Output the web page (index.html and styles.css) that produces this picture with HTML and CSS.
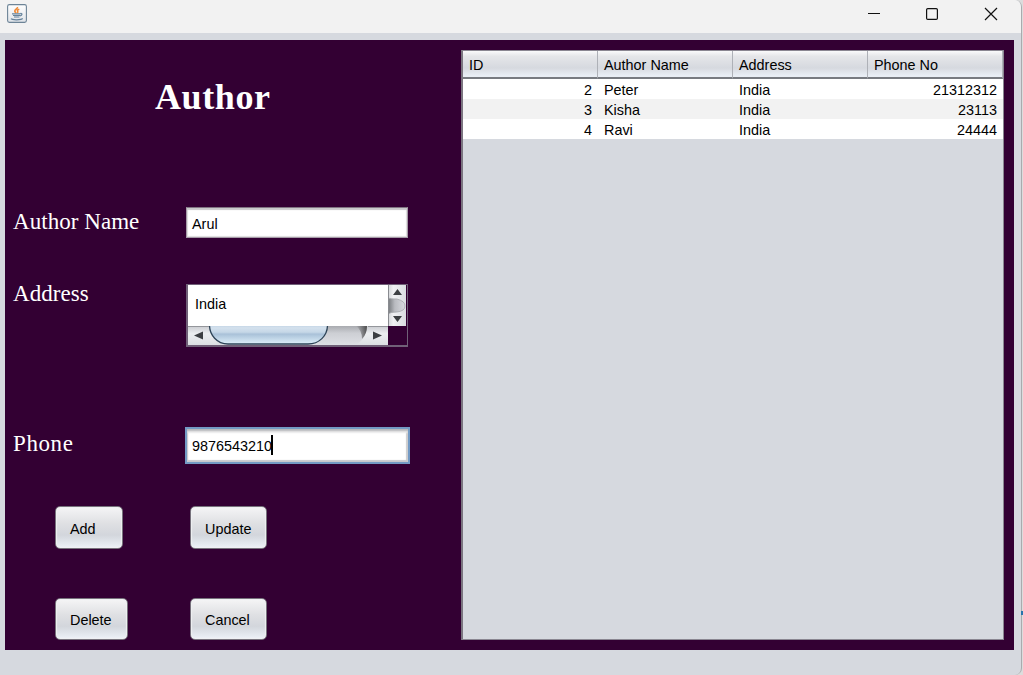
FILE: index.html
```html
<!DOCTYPE html>
<html lang="en">
<head>
<meta charset="utf-8">
<title>Author</title>
<link rel="stylesheet" href="styles.css">
</head>
<body>
<div class="window">
  <header class="titlebar">
    <svg class="app-icon" width="20" height="19" viewBox="0 0 20 19">
      <defs><linearGradient id="ib" x1="0" y1="0" x2="0" y2="1"><stop offset="0" stop-color="#fff"/><stop offset="1" stop-color="#dfe3e8"/></linearGradient></defs>
      <rect x=".6" y=".6" width="18.8" height="17.8" rx="1.8" fill="url(#ib)" stroke="#6d8497" stroke-width="1.1"/>
      <path d="M10.500 3c.5 1.700-3.200 2.700-2.700 4.300.2.700 1 1.200 1.200 1.700M12.300 5.200c-1.800.6-2.300 1.200-1.600 2 .4.600.1 1.200-.5 1.700" fill="none" stroke="#f08a35" stroke-width="1.600"/>
      <path d="M5 9.800h8.500M6 11.500h7M7 13h5.500M13.500 9.500c2.200-.4 1.800 2-.5 2.400M4 14.700c1 1.500 10.500 1.500 11.600-.3" fill="none" stroke="#65829b" stroke-width="1.200"/>
    </svg>
    <svg class="win-buttons" width="132" height="14" viewBox="0 0 132 14" fill="none" stroke="#111" stroke-width="1.200">
      <path d="M0 6.500h12"/>
      <rect x="58.600" y="1.600" width="10.800" height="10.800" rx="1.200"/>
      <path d="M117 1l12 12M129 1l-12 12"/>
    </svg>
  </header>
  <main class="panel">
    <section class="form">
      <h1 class="title">Author</h1>
      <div class="row row-name"><span class="label">Author Name</span><div class="field">Arul</div></div>
      <div class="row row-address"><span class="label">Address</span>
        <div class="scrollpane">
          <div class="textarea">India</div>
          <svg class="vbar" width="18" height="41" viewBox="0 0 18 41">
            <defs>
              <linearGradient id="vt"><stop offset="0" stop-color="#74777b"/><stop offset=".4" stop-color="#b9bbc0"/><stop offset="1" stop-color="#d9dbe0"/></linearGradient>
              <linearGradient id="vb"><stop offset="0" stop-color="#d3d5d8"/><stop offset=".3" stop-color="#f0f1f3"/><stop offset="1" stop-color="#dadde1"/></linearGradient>
            </defs>
            <rect width="18" height="41" fill="url(#vb)"/>
            <path d="M0 13q2 1 9 1q8 2 8 7t-8 6q-7 0-9 2z" fill="url(#vt)"/>
            <path d="M0 13q2 1 9 1q8 2 8 7t-8 6q-7 0-9 2" fill="none" stroke="#9da0a5" stroke-width=".7"/>
            <path d="M5 10l4.500-6 4.500 6zM5 31h9l-4.500 6z" fill="#3c3f42"/>
            <path d="M.5 0v41" stroke="#898b90"/>
          </svg>
          <svg class="hbar" width="200" height="19" viewBox="0 0 200 19">
            <defs>
              <linearGradient id="hb" x1="0" y1="0" x2="0" y2="1"><stop offset="0" stop-color="#c9cbd0"/><stop offset=".4" stop-color="#eceef0"/><stop offset="1" stop-color="#dcdfe3"/></linearGradient>
              <linearGradient id="ht" x1="0" y1="0" x2="0" y2="1"><stop offset="0" stop-color="#a9abb0"/><stop offset=".4" stop-color="#cdcfd4"/><stop offset="1" stop-color="#dcdee3"/></linearGradient>
              <linearGradient id="hs"><stop offset="0" stop-color="#333" stop-opacity="0"/><stop offset="1" stop-color="#333" stop-opacity=".8"/></linearGradient>
              <linearGradient id="th" x1="0" y1="0" x2="0" y2="1"><stop offset="0" stop-color="#bfd2e3"/><stop offset=".15" stop-color="#d4e1ed"/><stop offset=".38" stop-color="#c5d7e7"/><stop offset=".48" stop-color="#a9c1d8"/><stop offset="1" stop-color="#def0fa"/></linearGradient>
            </defs>
            <rect width="200" height="19" fill="url(#hb)"/>
            <path d="M22 0h157q-1 13-10 18H30z" fill="url(#ht)"/>
            <path d="M168 0h11q0 8-5 13q0-9-6-13z" fill="url(#hs)"/>
            <path d="M21.500-1C21.500 9 29 18 40 18h80c11 0 19.500-8 19.500-19z" fill="url(#th)" stroke="#2d4357" stroke-width="1.300"/>
            <path d="M15 5.500v8L6 9.500zM185 5.500v8l9-4z" fill="#3c3f42"/>
            <path d="M0 .5h21M180 .5h20" stroke="#94969b"/>
          </svg>
        </div>
      </div>
      <div class="row row-phone"><span class="label label-phone">Phone</span><div class="field field-focus">9876543210<span class="caret"></span></div></div>
      <div class="buttons">
        <button class="btn btn-add">Add</button><button class="btn btn-update">Update</button>
        <button class="btn btn-delete">Delete</button><button class="btn btn-cancel">Cancel</button>
      </div>
    </section>
    <section class="table-pane">
      <table class="table">
        <thead><tr><th>ID</th><th>Author Name</th><th>Address</th><th>Phone No</th></tr></thead>
        <tbody>
          <tr><td class="num">2</td><td>Peter</td><td>India</td><td class="num">21312312</td></tr>
          <tr><td class="num">3</td><td>Kisha</td><td>India</td><td class="num">23113</td></tr>
          <tr><td class="num">4</td><td>Ravi</td><td>India</td><td class="num">24444</td></tr>
        </tbody>
      </table>
    </section>
  </main>
</div>
<span class="edge-mark"></span>
</body>
</html>
```
FILE: styles.css
```css
* { box-sizing: border-box; }
body {
  margin: 0;
  position: relative;
  width: 1023px;
  background: #dcdcdc;
  font: 14.4px "Liberation Sans", Arial, sans-serif;
  color: #000;
  overflow: hidden;
}
.window {
  width: 1022px;
  height: 675px;
  background: #d6d9df;
  border-right: 1px solid #a9abae;
  border-radius: 0 7px 7px 0;
  overflow: hidden;
}
.titlebar {
  height: 33px;
  padding: 4px 21px 0 7px;
  background: #f2f2f2;
  display: flex;
  justify-content: space-between;
}
.win-buttons { margin: 3px 0 0; }
.panel {
  display: flex;
  width: 1009px;
  height: 610px;
  margin: 7px 0 0 5px;
  background: #330033;
}
.form { width: 456px; height: 610px; padding-left: 8px; }
.title {
  margin: 36px 0 0 142px;
  height: 42px;
  font: bold 36px/42px "Liberation Serif", "Times New Roman", serif;
  letter-spacing: .6px;
  color: #fff;
}
.row { display: flex; }
.label {
  width: 173px;
  font: 23px/26px "Liberation Serif", "Times New Roman", serif;
  letter-spacing: .05px;
  color: #fff;
}
.label-phone { letter-spacing: .6px; }
.row-name { margin-top: 89px; height: 31px; }
.row-name .label { padding-top: 2px; }
.row-address { margin-top: 46px; height: 63px; }
.row-address .label { margin-top: -3px; }
.row-phone { margin-top: 80px; height: 37px; }
.row-phone .label { width: 172px; padding-top: 4px; }
.field {
  width: 222px;
  height: 31px;
  padding: 1px 0 0 5px;
  line-height: 31px;
  background: #fff;
  border: 1px solid #a69ba8;
  border-top-color: #807482;
  box-shadow: inset 0 2px 1px #c9c9cb, inset 1px 0 1px #ddd, inset -1px -1px 1px #ddd;
}
.field-focus {
  display: flex;
  width: 225px;
  height: 37px;
  line-height: 33px;
  border: 2px solid #739ac4;
  box-shadow: inset 0 2px 2px #b5b6ba, inset 0 4px 2px #eee, inset 1px -2px 1px #c8c8cc, inset -2px 0 1px #ccc;
}
.caret { width: 2px; height: 20px; margin: 5px 0 0 -1px; background: #000; }
.scrollpane {
  display: grid;
  grid-template: 41px 19px / 200px 18px;
  width: 222px;
  height: 63px;
  border: 1px solid #706078;
  border-width: 1px 1px 2px 2px;
}
.textarea { background: #fff; padding: 0 0 0 7px; line-height: 39px; }
.vbar, .hbar { display: block; }
.hbar { overflow: hidden; }
.buttons {
  display: grid;
  grid-template-columns: 135px 77px;
  row-gap: 49px;
  justify-items: start;
  margin: 42px 0 0 42px;
}
.btn {
  height: 43px;
  padding: 2px 0 0 14px;
  text-align: left;
  font: inherit;
  border: 1px solid #77727c;
  border-radius: 5px;
  background: linear-gradient(#f5f5f6 0%, #dfe0e3 40%, #d3d6dc 68%, #d8dce2 75%, #eef2f8 100%);
  box-shadow: inset 0 0 1px 1px #eff0f2;
}
.btn-add { width: 68px; }
.btn-update, .btn-cancel { width: 77px; }
.btn-delete { width: 73px; }
.btn-delete, .btn-cancel { height: 42px; padding-top: 1px; }
.table-pane {
  width: 543px;
  height: 590px;
  margin-top: 10px;
  background: #d6d9df;
  border: 1px solid #8a8691;
  border-left: 2px solid #7b7580;
}
.table {
  width: 540px;
  table-layout: fixed;
  border-collapse: separate;
  border-spacing: 0;
}
.table th {
  height: 28px;
  padding: 1px 6px 0;
  text-align: left;
  font-weight: normal;
  background: linear-gradient(#fafafb 0%, #e5e6e9 20%, #d6d9df 65%, #e8edf4 94%);
  border-right: 1px solid #aeb1b7;
  border-bottom: 2px solid #777a80;
}
.table td { height: 20px; padding: 2px 6px 0; line-height: 18px; background: #fff; }
.table tr:nth-child(even) td { background: #f2f2f2; }
.table .num { text-align: right; padding-right: 6px; }
.edge-mark { position: absolute; right: 0; top: 611px; width: 2px; height: 4px; background: #2675ad; }
```
